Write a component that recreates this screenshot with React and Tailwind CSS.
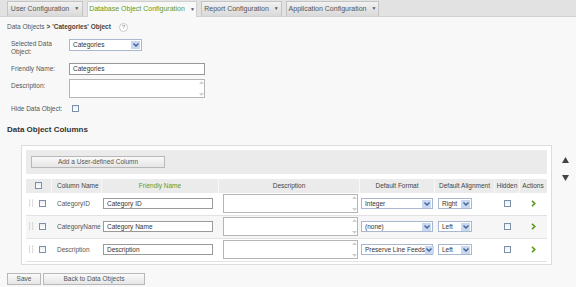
import React from "react";

const F = { fontFamily: '"Liberation Sans", Arial, sans-serif' };

function Tab({ label, active, w }) {
  return (
    <div
      className={
        "flex h-[15px] items-center justify-center gap-[5px] border border-b-0 text-[7px] " +
        (active
          ? "border-[#d0d0d0] bg-[#f8f8f8] text-[#5f9a1e] h-[16px] -mb-px"
          : "border-[#c4c4c4] bg-gradient-to-b from-[#f2f2f2] to-[#d9d9d9] text-[#555]")
      }
      style={{ width: w }}
    >
      <span>{label}</span>
      <span className="text-[5px] text-[#555]">▼</span>
    </div>
  );
}

function Select({ value, w, h = 12 }) {
  return (
    <div
      className="flex items-center justify-between border border-[#a9b7cf] bg-white pl-[3px] pr-px text-[#333]"
      style={{ width: w, height: h }}
    >
      <span className="whitespace-nowrap">{value}</span>
      <div className="flex h-[8px] w-[9px] shrink-0 items-center justify-center bg-[#c9d8f1]">
        <svg width="6" height="4" viewBox="0 0 6 4">
          <polyline points="0.5,0.5 3,3 5.5,0.5" fill="none" stroke="#3d5f96" strokeWidth="1.3" />
        </svg>
      </div>
    </div>
  );
}

function Checkbox({ size = 7 }) {
  return (
    <div
      className="shrink-0 border border-[#7c8fa8] bg-gradient-to-b from-[#e8edf3] to-white"
      style={{ width: size, height: size }}
    />
  );
}

function TextArea({ w, h }) {
  return (
    <div
      className="flex justify-end border border-[#b5b5b5] bg-white"
      style={{ width: w, height: h }}
    >
      <div className="flex w-[6px] flex-col items-center justify-between py-px">
        <svg width="5" height="3" viewBox="0 0 5 3">
          <polygon points="0,3 2.5,0 5,3" fill="#d0d0d0" />
        </svg>
        <svg width="5" height="3" viewBox="0 0 5 3">
          <polygon points="0,0 2.5,3 5,0" fill="#d0d0d0" />
        </svg>
      </div>
    </div>
  );
}

function Input({ value, w, h = 11 }) {
  return (
    <div
      className="flex items-center border border-[#9a9a9a] bg-white pl-[3px] text-[#333]"
      style={{ width: w, height: h }}
    >
      {value}
    </div>
  );
}

function Grip() {
  return (
    <svg width="5" height="9" viewBox="0 0 5 9">
      {[0, 1, 2, 3].map((r) =>
        [0, 1].map((c) => (
          <rect key={r + "-" + c} x={c * 3} y={r * 2 + 0.5} width="1.2" height="1.2" fill="#c9c9c9" />
        ))
      )}
    </svg>
  );
}

const cols = [26, 50, 117, 141, 75, 60, 25, 26];

const rows = [
  { name: "CategoryID", friendly: "Category ID", format: "Integer", align: "Right", bg: "bg-white" },
  { name: "CategoryName", friendly: "Category Name", format: "(none)", align: "Left", bg: "bg-[#f6f6f6]" },
  { name: "Description", friendly: "Description", format: "Preserve Line Feeds", align: "Left", bg: "bg-white" },
];

export default function App() {
  return (
    <div className="h-[287px] w-[576px] overflow-hidden bg-[#f8f8f8] text-[6.5px] text-[#555]" style={F}>
      {/* Tab bar */}
      <div className="flex h-[17px] items-end gap-[4px] border-b border-[#d0d0d0] bg-[#e2e2e2] pl-[7px]">
        <Tab label="User Configuration" w={76} />
        <Tab label="Database Object Configuration" w={110} active />
        <Tab label="Report Configuration" w={81} />
        <Tab label="Application Configuration" w={93} />
      </div>

      {/* Breadcrumb */}
      <div className="mt-[5px] flex h-[10px] items-center pl-[7px]">
        <span className="text-[#555]">Data Objects</span>
        <span className="ml-[2px] font-bold text-[#444]">&gt; 'Categories' Object</span>
        <div className="ml-[8px] flex h-[9px] w-[9px] items-center justify-center rounded-full border border-[#c8c8c8] bg-white text-[6px] text-[#888]">
          ?
        </div>
      </div>

      {/* Form */}
      <div className="mt-[7px] flex flex-col pl-[11px]">
        <div className="flex">
          <div className="mt-px w-[58px] leading-[8px]">
            Selected Data
            <br />
            Object:
          </div>
          <Select value="Categories" w={73} />
        </div>
        <div className="mt-[7px] flex items-center">
          <div className="w-[58px]">Friendly Name:</div>
          <Input value="Categories" w={136} h={12} />
        </div>
        <div className="mt-[4px] flex">
          <div className="mt-[2px] w-[58px]">Description:</div>
          <TextArea w={136} h={19} />
        </div>
        <div className="mt-[6px] flex items-center">
          <div className="w-[61px]">Hide Data Object:</div>
          <Checkbox size={7} />
        </div>
      </div>

      <div className="mt-[11px] pl-[7px] text-[8px] font-bold leading-[10px] text-[#333]">Data Object Columns</div>

      {/* Panel + arrows */}
      <div className="mt-[10px] flex">
        <div className="ml-[21px] h-[120px] w-[531px] border border-[#dcdcdc] bg-white p-[4px]">
          <div className="flex h-[24px] items-center bg-[#ebebeb] pl-[5px]">
            <div className="flex h-[12px] w-[134px] items-center justify-center border border-[#b8b8b8] bg-gradient-to-b from-[#fafafa] to-[#e6e6e6] text-[#555]">
              Add a User-defined Column
            </div>
          </div>

          {/* header */}
          <div className="mt-[5px] flex h-[14px] bg-[#ebebeb] text-[#444]">
            {[
              <Checkbox key="c" />,
              <span key="n" className="w-full pl-[5px] text-left">Column Name</span>,
              <span key="f" className="text-[#5f9a1e]">Friendly Name</span>,
              "Description",
              "Default Format",
              "Default Alignment",
              "Hidden",
              "Actions",
            ].map((c, i) => (
              <div
                key={i}
                className={
                  "flex items-center justify-center whitespace-nowrap " +
                  (i < 7 ? "border-r border-[#f8f8f8]" : "")
                }
                style={{ width: cols[i] }}
              >
                {c}
              </div>
            ))}
          </div>

          {rows.map((r, idx) => (
            <div key={idx} className={"flex h-[23px] items-center border-b border-[#e2e2e2] " + r.bg}>
              <div className="flex items-center gap-[5px] pl-[3px]" style={{ width: cols[0] }}>
                <Grip />
                <Checkbox />
              </div>
              <div className="whitespace-nowrap pl-[5px]" style={{ width: cols[1] }}>
                {r.name}
              </div>
              <div className="pl-px" style={{ width: cols[2] }}>
                <Input value={r.friendly} w={110} h={11} />
              </div>
              <div className="pl-[4px]" style={{ width: cols[3] }}>
                <TextArea w={135} h={19} />
              </div>
              <div className="pl-px" style={{ width: cols[4] }}>
                <Select value={r.format} w={72} h={11} />
              </div>
              <div className="pl-[3px]" style={{ width: cols[5] }}>
                <Select value={r.align} w={34} h={11} />
              </div>
              <div className="flex justify-center" style={{ width: cols[6] }}>
                <Checkbox />
              </div>
              <div className="flex justify-center" style={{ width: cols[7] }}>
                <svg width="5" height="7" viewBox="0 0 5 7">
                  <polyline points="1,0.8 3.8,3.5 1,6.2" fill="none" stroke="#5f9a1e" strokeWidth="1.6" />
                </svg>
              </div>
            </div>
          ))}
        </div>
        <div className="ml-[10px] mt-[12px] flex flex-col gap-[12px]">
          <svg width="7" height="6" viewBox="0 0 7 6">
            <polygon points="0,6 3.5,0 7,6" fill="#444" />
          </svg>
          <svg width="7" height="6" viewBox="0 0 7 6">
            <polygon points="0,0 3.5,6 7,0" fill="#444" />
          </svg>
        </div>
      </div>

      {/* Bottom buttons */}
      <div className="mt-[8px] flex gap-[2px] pl-[7px]">
        <div className="flex h-[12px] w-[34px] items-center justify-center border border-[#b8b8b8] bg-gradient-to-b from-[#fafafa] to-[#e6e6e6]">
          Save
        </div>
        <div className="flex h-[12px] w-[102px] items-center justify-center border border-[#b8b8b8] bg-gradient-to-b from-[#fafafa] to-[#e6e6e6]">
          Back to Data Objects
        </div>
      </div>
    </div>
  );
}
